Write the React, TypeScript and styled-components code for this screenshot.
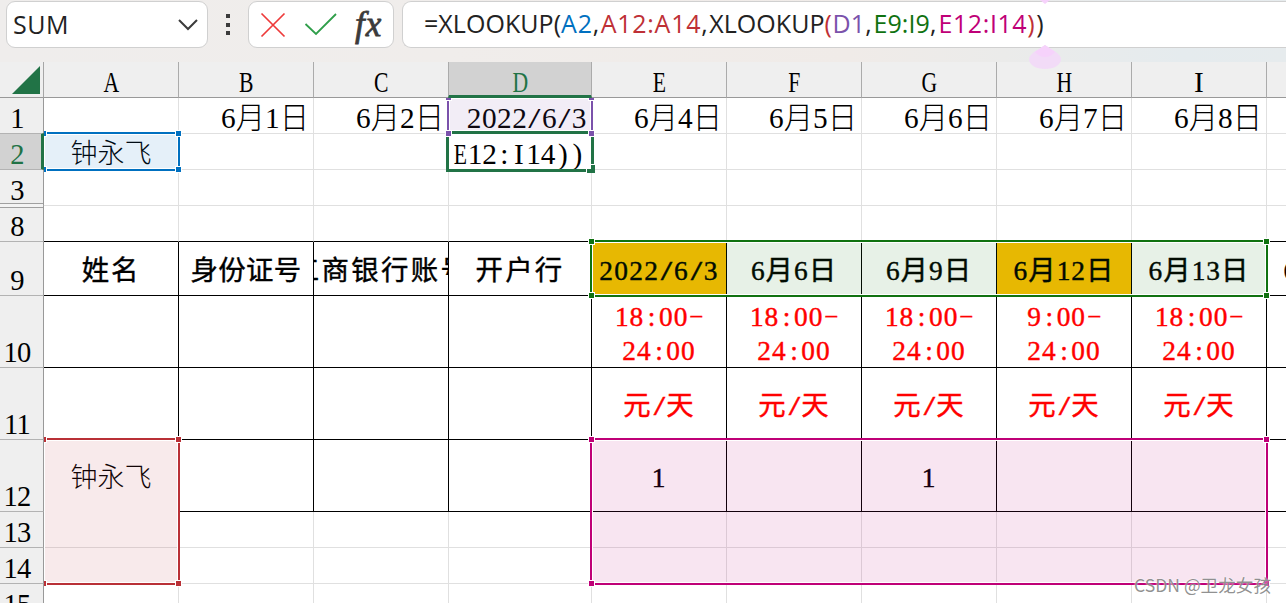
import React from "react";
import styled, { createGlobalStyle, css } from "styled-components";

const GlobalStyle = createGlobalStyle`
  * {
    box-sizing: border-box;
  }
  body {
    margin: 0;
    overflow: hidden;
    background: #ffffff;
  }
`;

const GREEN = "#217346";
const UI_FONT = `"Open Sans", "Noto Sans", sans-serif`;
const SHEET_FONT = `"Liberation Serif", "Noto Sans CJK SC", serif`;

const Window = styled.div`
  position: relative;
  width: 1286px;
  height: 603px;
  overflow: hidden;
  background: #ffffff;
`;

const FormulaBar = styled.div`
  display: flex;
  align-items: flex-start;
  height: 62px;
  padding: 1px 0 0 6px;
  background: linear-gradient(
    90deg,
    #efedec 0%,
    #f0edeb 35%,
    #f0ebe8 66%,
    #ebebea 78%,
    #e5ebee 92%,
    #e6ebed 100%
  );
`;

const Box = styled.div`
  display: flex;
  align-items: center;
  height: 47px;
  border: 1px solid #d0d0d0;
  border-radius: 9px;
  background: #ffffff;
  font-family: ${UI_FONT};
  font-size: 25px;
  color: #222222;
`;

const NameBox = styled(Box)`
  width: 202px;
  justify-content: space-between;
  padding: 0 8px 0 6px;
  letter-spacing: 0.5px;
`;

const NameText = styled.span`
  padding-bottom: 2px;
`;

const Dots = styled.div`
  display: flex;
  flex-direction: column;
  justify-content: space-between;
  width: 4px;
  height: 21px;
  margin: 13px 18px 0;
`;

const Dot = styled.span`
  width: 4px;
  height: 4px;
  background: #3b3b3b;
`;

const ActionBox = styled(Box)`
  width: 146px;
  padding-left: 11px;
  gap: 18px;
`;

const FxLabel = styled.span`
  margin-left: -1px;
  font-family: "Liberation Serif", serif;
  font-style: italic;
  font-size: 35px;
  line-height: 40px;
  letter-spacing: 1px;
  color: #3b3b3b;
  -webkit-text-stroke: 0.8px #3b3b3b;
`;

const FormulaBox = styled(Box)`
  flex: 1;
  margin-left: 8px;
  padding: 0 0 3px 21px;
  border-right: none;
  border-radius: 9px 0 0 9px;
  white-space: pre;
`;

const Token = styled.span<{ $color?: string; $spacing?: number }>`
  color: ${(p) => p.$color || "#222222"};
  letter-spacing: ${(p) => p.$spacing || 0}px;
`;

const Sheet = styled.div`
  display: grid;
  grid-template-columns: 44px repeat(3, 135px) 143px repeat(5, 135px) 135px;
  grid-template-rows: repeat(5, 36px) 54px repeat(3, 72px) repeat(3, 36px);
  font-family: ${SHEET_FONT};
  font-size: 29.3px;
  line-height: 30px;
  color: #000000;
`;

const place = css<{ $col: number; $row: number }>`
  grid-column: ${(p) => p.$col};
  grid-row: ${(p) => p.$row};
`;

const Corner = styled.div`
  display: flex;
  align-items: flex-end;
  justify-content: flex-end;
  grid-column: 1;
  grid-row: 1;
  z-index: 4;
  padding: 0 3px 3px 0;
  border-right: 1px solid #a6a6a6;
  border-bottom: 1px solid #999999;
  background: #efefef;
`;

const ColumnHead = styled.div<{ $col: number; $row: number; $active: boolean }>`
  ${place}
  z-index: 3;
  display: flex;
  align-items: flex-end;
  justify-content: center;
  border-right: 1px solid #ababab;
  border-bottom: 1px solid #999999;
  background: #efefef;
  ${(p) =>
    p.$active &&
    css`
      margin-left: -1px;
      border-bottom: 3px solid ${GREEN};
      border-left: 1px solid #ababab;
      background: #d2d2d2;
      color: ${GREEN};
      line-height: 26px;
    `}
`;

const RowHead = styled.div<{ $col: number; $row: number; $active: boolean }>`
  ${place}
  z-index: 3;
  display: flex;
  align-items: flex-end;
  justify-content: center;
  padding-right: 9px;
  border-right: 1px solid #999999;
  border-bottom: 1px solid #b3b3b3;
  background: #efefef;
  font-size: 28.5px;
  line-height: 29px;
  letter-spacing: -0.8px;
  ${(p) =>
    p.$active &&
    css`
      margin-top: -1px;
      padding-right: 7px;
      border-top: 1px solid #b3b3b3;
      border-right: 3px solid ${GREEN};
      background: #d2d2d2;
      color: ${GREEN};
    `}
`;

const HiddenRowsMark = styled.div`
  grid-column: 1;
  grid-row: 4;
  z-index: 4;
  align-self: end;
  height: 5px;
  margin: 0 1px -2px 0;
  border-top: 1px solid #a0a0a0;
  border-bottom: 1px solid #a0a0a0;
  background: #f3f3f3;
`;

type CellProps = {
  $col: number;
  $row: number;
  $right: string;
  $bottom: string;
  $align?: "right" | "left" | "center";
  $middle?: boolean;
  $bold?: boolean;
  $color?: string;
  $fill?: string;
  $size?: number;
  $spacing?: number;
};

const justify = { left: "flex-start", center: "center", right: "flex-end" };

const Cell = styled.div<CellProps>`
  ${place}
  display: flex;
  align-items: ${(p) => (p.$middle ? "center" : "flex-end")};
  justify-content: ${(p) => justify[p.$align || "center"]};
  min-width: 0;
  overflow: hidden;
  padding: ${(p) => (p.$middle ? "4px 0 0" : "0 4px 0 4px")};
  border-right: 1px solid ${(p) => p.$right};
  border-bottom: 1px solid ${(p) => p.$bottom};
  background: ${(p) => p.$fill || "#ffffff"};
  color: ${(p) => p.$color || "#000000"};
  font-weight: 300;
  white-space: pre;
  text-align: center;
  ${(p) =>
    p.$bold &&
    css`
      font-size: 27.4px;
      font-weight: 400;
      line-height: 34px;
      letter-spacing: 1px;
      -webkit-text-stroke: 0.4px currentColor;
    `}
  ${(p) => p.$size && `font-size: ${p.$size}px;`}
  ${(p) => p.$spacing && `letter-spacing: ${p.$spacing}px;`}
`;

// Half-em cell for capitals and punctuation, so they line up with the digits
const Half = styled.span<{ $transform: string; $bold?: boolean }>`
  display: inline-block;
  width: ${(p) => (p.$bold ? "calc(0.5em + 1px)" : "0.5em")};
  letter-spacing: 0;

  & > span {
    display: flex;
    justify-content: center;
    transform: ${(p) => p.$transform};
    -webkit-text-stroke: ${(p) => (p.$bold ? 0.4 : 0)}px currentColor;
  }
`;

const Range = styled.div<{ $area: string; $color: string; $fill: string; $joined?: boolean }>`
  grid-area: ${(p) => p.$area};
  position: relative;
  z-index: 2;
  margin: -2px -1px -1px -2px;
  border: 2px solid ${(p) => p.$color};
  background: ${(p) => p.$fill};
  box-shadow: inset 0 0 0 1px #ffffff;
  ${(p) =>
    p.$joined &&
    css`
      margin-bottom: 3px;
      border-bottom: none;

      & > i:nth-child(n + 3) {
        bottom: -5px;
      }
    `}
`;

const Handle = styled.i<{ $color: string; $v: "top" | "bottom"; $h: "left" | "right" }>`
  position: absolute;
  ${(p) => p.$v}: -3px;
  ${(p) => p.$h}: -3px;
  width: 5px;
  height: 5px;
  background: ${(p) => p.$color};
  box-shadow: 0 0 0 1px #ffffff;
`;

const ActiveCell = styled.div`
  grid-area: 3 / 5 / 4 / 6;
  position: relative;
  z-index: 1;
  margin: -3px -2px -2px -3px;
  border: 3px solid ${GREEN};
`;

const FillHandle = styled.i`
  position: absolute;
  right: -4px;
  bottom: -4px;
  width: 8px;
  height: 8px;
  border: solid ${GREEN};
  border-width: 0 4px 4px 0;
  box-shadow: -1px -1px 0 #ffffff;
`;

const CaretGrip = styled.svg`
  position: absolute;
  left: 1029px;
  top: 0;
  z-index: 5;
`;

const Watermark = styled.div`
  position: absolute;
  right: 15px;
  bottom: 5px;
  z-index: 6;
  font-family: "Noto Sans CJK SC", sans-serif;
  font-size: 17.6px;
  line-height: 26px;
  color: rgba(125, 125, 125, 0.85);
  text-shadow: 0 0 2px #ffffff;
`;

const columns = ["A", "B", "C", "D", "E", "F", "G", "H", "I", "J"];
const rows = [1, 2, 3, 8, 9, 10, 11, 12, 13, 14, 15];

const values: Record<string, string> = {
  B1: "6月1日",
  C1: "6月2日",
  D1: "2022/6/3",
  E1: "6月4日",
  F1: "6月5日",
  G1: "6月6日",
  H1: "6月7日",
  I1: "6月8日",
  A2: "钟永飞",
  D2: "E12:I14))",
  A9: "姓名",
  B9: "身份证号",
  C9: "工商银行账号",
  D9: "开户行",
  E9: "2022/6/3",
  F9: "6月6日",
  G9: "6月9日",
  H9: "6月12日",
  I9: "6月13日",
  J9: "6月14日",
  E10: "18:00-\n24:00",
  F10: "18:00-\n24:00",
  G10: "18:00-\n24:00",
  H10: "9:00-\n24:00",
  I10: "18:00-\n24:00",
  E11: "元/天",
  F11: "元/天",
  G11: "元/天",
  H11: "元/天",
  I11: "元/天",
  A12: "钟永飞",
  E12: "1",
  G12: "1",
};

const spacings: Record<string, number> = {
  D1: 0.5,
  A9: 1.8,
  B9: 0.3,
  C9: 2.4,
  D9: 2.2,
  E9: 1.3,
};

const ranges = [
  { area: "2 / 5 / 3 / 6", color: "#7b52ab", fill: "rgba(123, 82, 171, 0.1)", joined: true },
  { area: "3 / 2 / 4 / 3", color: "#0070c0", fill: "rgba(0, 112, 192, 0.1)" },
  { area: "6 / 6 / 7 / 11", color: "#107210", fill: "rgba(16, 114, 16, 0.1)" },
  { area: "9 / 2 / 12 / 3", color: "#b93036", fill: "rgba(190, 48, 54, 0.1)" },
  { area: "9 / 6 / 12 / 11", color: "#bf0077", fill: "rgba(191, 0, 119, 0.1)" },
];

const getTransform = (char: string) => {
  if (char === "I") return "none";
  if (/[A-Z]/.test(char)) return "scaleX(0.74)";
  if (char === "/") return "scaleX(1.5)";
  if (char === "-") return "translate(1px, -2px) scale(1.6, 0.7)";
  return "none";
};

const SheetText: React.FC<{ text: string; bold?: boolean }> = ({ text, bold }) => (
  <span>
    {text.split(/([A-Z/:()-])/).map((part, i) =>
      i % 2 ? (
        <Half key={i} $transform={getTransform(part)} $bold={bold}>
          <span>{part}</span>
        </Half>
      ) : (
        part
      )
    )}
  </span>
);

const getCellStyle = (col: string, row: number) => {
  const table = row >= 9 && row <= 12;
  const line = "#e0e0e0";
  const merged = col === "A" && row === 12;
  return {
    $right: table ? "#000000" : line,
    $bottom: merged ? "#ffffff" : table || row === 8 ? "#000000" : line,
    $align: row === 1 ? ("right" as const) : col + row === "D2" ? ("left" as const) : undefined,
    $middle: table,
    $bold: table && !merged,
    $color: row === 10 || row === 11 ? "#ff0000" : undefined,
    $fill: row === 9 && (col === "E" || col === "H") ? "#ffc000" : undefined,
    $size: col === "A" && row !== 9 ? 27 : undefined,
    $spacing: spacings[col + row],
  };
};

const SheetGrid: React.FC = () => (
  <Sheet>
    <Corner>
      <svg width="28" height="28">
        <path d="M28 0V28H0Z" fill={GREEN} />
      </svg>
    </Corner>
    {columns.map((col, i) => (
      <ColumnHead key={col} $col={i + 2} $row={1} $active={col === "D"}>
        {col !== "J" && <SheetText text={col} />}
      </ColumnHead>
    ))}
    {rows.map((row, r) => (
      <React.Fragment key={row}>
        <RowHead $col={1} $row={r + 2} $active={row === 2}>
          {row}
        </RowHead>
        {columns.map((col, c) => (
          <Cell key={col} $col={c + 2} $row={r + 2} {...getCellStyle(col, row)}>
            {values[col + row] && (
              <SheetText text={values[col + row]} bold={row >= 9} />
            )}
          </Cell>
        ))}
      </React.Fragment>
    ))}
    <HiddenRowsMark />
    <ActiveCell>
      <FillHandle />
    </ActiveCell>
    {ranges.map(({ area, color, fill, joined }) => (
      <Range key={area} $area={area} $color={color} $fill={fill} $joined={joined}>
        <Handle $color={color} $v="top" $h="left" />
        <Handle $color={color} $v="top" $h="right" />
        <Handle $color={color} $v="bottom" $h="left" />
        <Handle $color={color} $v="bottom" $h="right" />
      </Range>
    ))}
  </Sheet>
);

const App: React.FC = () => {
  return (
    <>
      <GlobalStyle />
      <Window>
        <FormulaBar>
          <NameBox>
            <NameText>SUM</NameText>
            <svg width="22" height="14" fill="none" stroke="#3b3b3b" strokeWidth="2">
              <path d="M2 2L11 11L20 2" />
            </svg>
          </NameBox>
          <Dots>
            <Dot />
            <Dot />
            <Dot />
          </Dots>
          <ActionBox>
            <svg width="26" height="26" fill="none" stroke="#ee3a3a" strokeWidth="1.7">
              <path d="M1.500 1.500L24.500 24.500M24.500 1.500L1.500 24.500" />
            </svg>
            <svg width="34" height="26" fill="none" stroke="#2f9e4a" strokeWidth="1.8">
              <path d="M1.500 12L12 22L32 2" />
            </svg>
            <FxLabel>fx</FxLabel>
          </ActionBox>
          <FormulaBox>
            <div>
              <Token $spacing={0.05}>=XLOOKUP(</Token>
              <Token $color="#0070c0" $spacing={0.8}>A2</Token>
              <Token $spacing={1.6}>,</Token>
              <Token $color="#be3036" $spacing={0.7}>A12:A14</Token>
              <Token $spacing={1.6}>,</Token>
              <Token $spacing={0.05}>XLOOKUP</Token>
              <Token $color="#be3036" $spacing={0.6}>(</Token>
              <Token $color="#7b52ab" $spacing={0.2}>D1</Token>
              <Token $spacing={1.6}>,</Token>
              <Token $color="#107210" $spacing={0.1}>E9:I9</Token>
              <Token $spacing={2}>,</Token>
              <Token $color="#bf0077" $spacing={0.6}>E12:I14</Token>
              <Token $color="#be3036" $spacing={1.6}>)</Token>
              <Token>)</Token>
            </div>
          </FormulaBox>
        </FormulaBar>
        <SheetGrid />
        <CaretGrip width="32" height="70">
          <path d="M11 0H21L16 4Z" fill="#f6d2fb" />
          <path d="M16 45L27 52Q32 56 32 59C32 65 25 69 16 69C7 69 0 65 0 59Q0 56 5 52Z" fill="#f2dbf7" />
          <path d="M16 45L26 52Q22 57 16 57Q10 57 6 52Z" fill="#f6d2fb" />
        </CaretGrip>
        <Watermark>CSDN @卫龙女孩</Watermark>
      </Window>
    </>
  );
};

export default App;
